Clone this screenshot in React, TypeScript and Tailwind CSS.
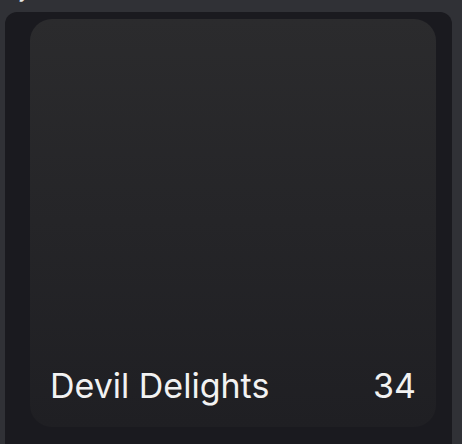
export default function App() {
  return (
    <div className="w-[462px] h-[444px] overflow-hidden bg-[#303136]" style={{ fontFamily: 'Inter, "Noto Sans", sans-serif' }}>
      <div className="h-[12px] overflow-hidden relative">
        <span className="absolute left-[18px] -top-[22px] text-[22px] text-[#e5e5e5] leading-none">y</span>
      </div>
      <div className="ml-[5px] w-[447px] h-[460px] rounded-[12px] bg-[#1a1a1f] pl-[25px] pr-[16px] pt-[7px]">
        <div className="h-[408px] rounded-[22px] bg-gradient-to-b from-[#2b2b2d] to-[#1f1f23] flex flex-col justify-end px-5 pb-[24px]">
          <div className="flex items-end justify-between text-[34px] text-[#f2f2f2] leading-none">
            <span>Devil Delights</span>
            <span>34</span>
          </div>
        </div>
      </div>
    </div>
  );
}
